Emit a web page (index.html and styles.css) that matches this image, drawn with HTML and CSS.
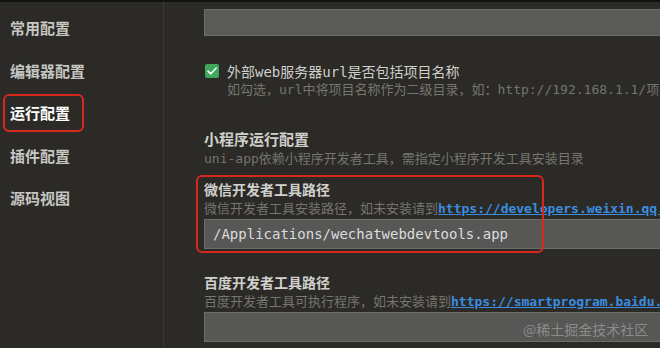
FILE: index.html
```html
<!DOCTYPE html>
<html lang="zh-CN">
<head>
	<meta charset="UTF-8" />
	<title>运行配置</title>
	<link rel="stylesheet" href="styles.css">
</head>
<body>
	<div class="app">
		<div class="sidebar">
			<div class="nav-item">常用配置</div>
			<div class="nav-item">编辑器配置</div>
			<div class="nav-item active">运行配置</div>
			<div class="nav-item">插件配置</div>
			<div class="nav-item">源码视图</div>
		</div>

		<div class="main">
			<div class="text-input top-input"></div>

			<div class="check-row">
				<span class="checkbox">
					<svg width="10" height="8" viewBox="0 0 10 8"><path d="M1 4.2 L3.8 6.8 L9 1.2" fill="none" stroke="#fff" stroke-width="1.6" stroke-linecap="round" stroke-linejoin="round"/></svg>
				</span>
				<span class="field-label">外部web服务器url是否包括项目名称</span>
			</div>
			<div class="hint check-hint">如勾选，url中将项目名称作为二级目录，如：http://192.168.1.1/项目名称</div>

			<div class="section-title">小程序运行配置</div>
			<div class="hint">uni-app依赖小程序开发者工具，需指定小程序开发工具安装目录</div>

			<div class="field highlighted">
				<div class="field-title">微信开发者工具路径</div>
				<div class="hint">微信开发者工具安装路径，如未安装请到<a class="link">https://developers.weixin.qq.com/miniprogram/dev/devtools/download.html</a></div>
				<div class="text-input">/Applications/wechatwebdevtools.app</div>
			</div>

			<div class="field baidu">
				<div class="field-title">百度开发者工具路径</div>
				<div class="hint">百度开发者工具可执行程序，如未安装请到<a class="link">https://smartprogram.baidu.com/docs/develop/devtools/show_sur/</a></div>
				<div class="text-input"></div>
			</div>
		</div>
	</div>
	<div class="watermark">@稀土掘金技术社区</div>
</body>
</html>
```

FILE: styles.css
```css
html, body {
	margin: 0;
	height: 100%;
	overflow: hidden;
}
body {
	background-color: #2b2a26;
	border-top: 2px solid #121212;
	box-sizing: border-box;
	font-family: "DejaVu Sans Mono", "Noto Sans CJK SC", monospace;
	position: relative;
}
.app {
	display: flex;
	height: 100%;
}
.sidebar {
	width: 163px;
	flex-shrink: 0;
	border-right: 1px solid #3a3934;
	padding-top: 5px;
	font-family: "Noto Sans CJK SC", sans-serif;
	font-weight: bold;
	font-size: 15px;
}
.nav-item {
	height: 42.6px;
	line-height: 42.6px;
	padding-left: 10px;
	color: #c6c6c3;
	white-space: nowrap;
}
.nav-item.active {
	position: relative;
	color: #ffffff;
}
.nav-item.active::after {
	content: "";
	position: absolute;
	left: 3px;
	top: 2px;
	width: 81px;
	height: 38px;
	box-sizing: border-box;
	border: 2px solid #d8281e;
	border-radius: 6px;
}
.main {
	flex: 1;
	min-width: 0;
	padding-left: 40px;
	overflow: hidden;
}
.text-input {
	width: calc(100% + 20px);
	height: 30px;
	box-sizing: border-box;
	background-color: #575756;
	border: 1px solid #6c6c6a;
	color: #dcdcdc;
	font-size: 14px;
	line-height: 28px;
	padding-left: 8px;
	white-space: nowrap;
}
.top-input {
	margin-top: 7px;
	height: 27px;
	background-color: #5a5a59;
}
.check-row {
	display: flex;
	align-items: center;
	gap: 8px;
	margin-top: 25px;
	height: 20px;
	padding-left: 1px;
}
.checkbox {
	width: 14px;
	height: 14px;
	border-radius: 2px;
	background-color: #3ea95c;
	display: flex;
	align-items: center;
	justify-content: center;
}
.field-label {
	font-size: 14px;
	color: #cfcfcc;
	white-space: nowrap;
}
.hint {
	font-size: 13px;
	line-height: 19px;
	color: #76756f;
	white-space: nowrap;
}
.check-hint {
	padding-left: 23px;
	line-height: 18px;
}
.section-title {
	margin-top: 32px;
	font-size: 15px;
	line-height: 18px;
	font-weight: bold;
	color: #cfcfcc;
}
.field {
	position: relative;
	margin-top: 13px;
}
.field.baidu {
	margin-top: 25px;
}
.field-title {
	font-size: 14px;
	line-height: 18px;
	font-weight: bold;
	color: #d0d0cd;
	white-space: nowrap;
}
.field .text-input {
	margin-top: 1px;
}
.link {
	color: #3b8de0;
	text-decoration: underline;
	font-weight: bold;
}
.field.highlighted::after {
	content: "";
	position: absolute;
	left: -8px;
	top: -6px;
	width: 348px;
	height: 78px;
	box-sizing: border-box;
	border: 2px solid #d8281e;
	border-radius: 6px;
}
.watermark {
	position: absolute;
	left: 523px;
	top: 317px;
	font-family: "Noto Sans CJK SC", sans-serif;
	font-size: 14px;
	line-height: 20px;
	color: rgba(255, 255, 255, 0.32);
	white-space: nowrap;
}
```
